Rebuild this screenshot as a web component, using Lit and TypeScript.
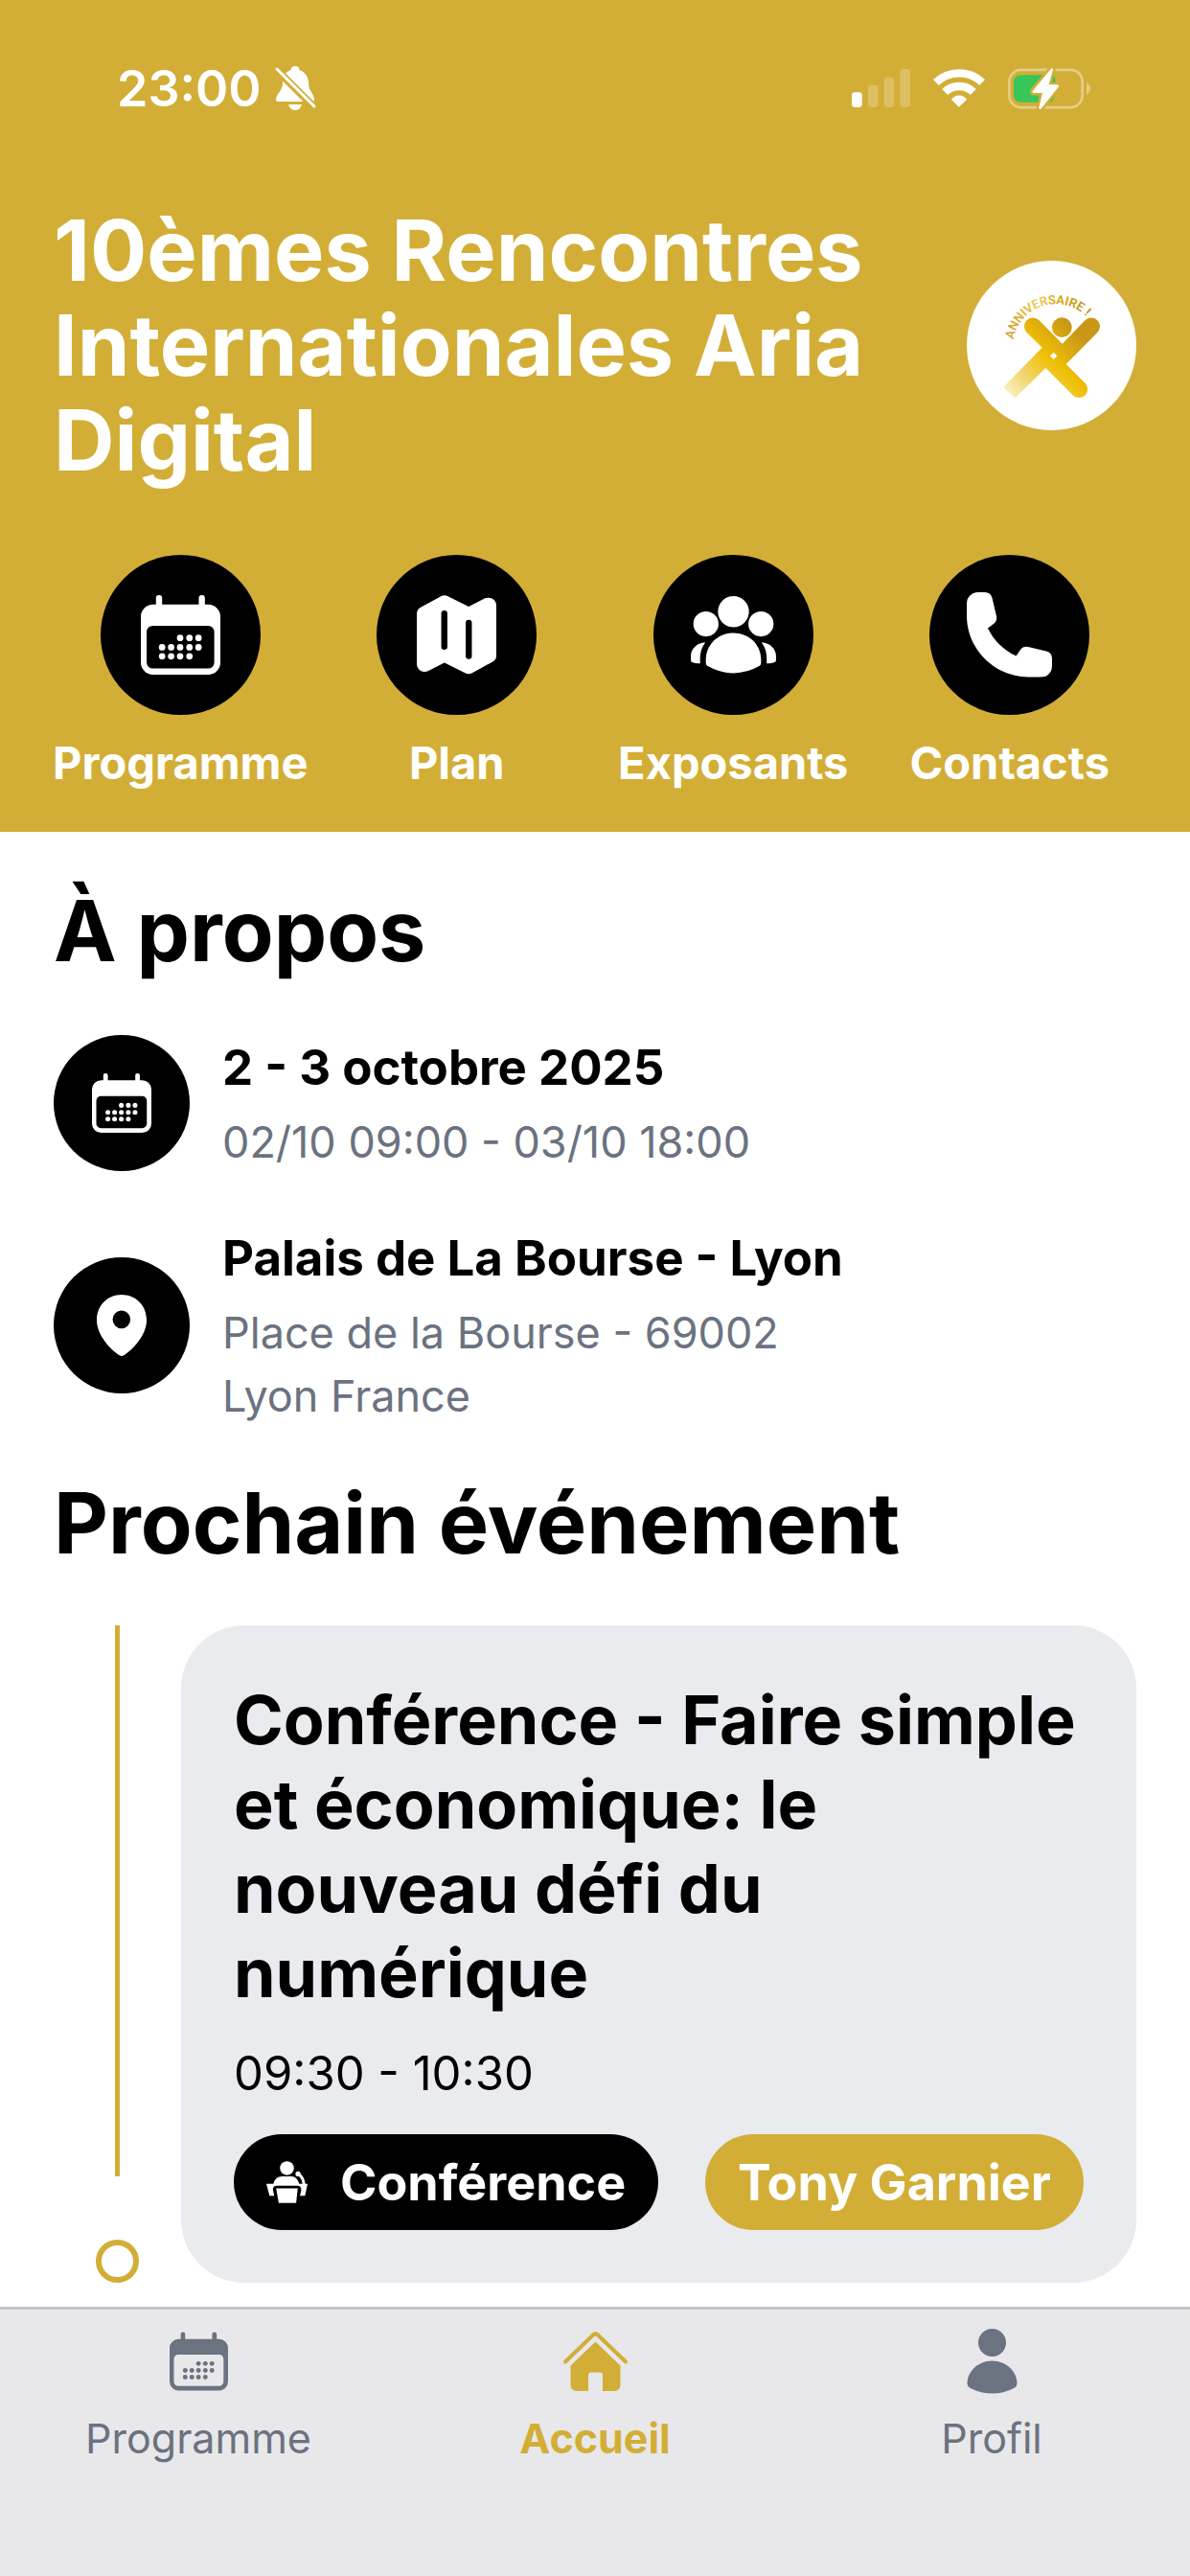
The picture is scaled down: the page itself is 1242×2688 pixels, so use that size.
import { LitElement, css, html, nothing, svg } from "lit";
import type { SVGTemplateResult } from "lit";
import { customElement, property } from "lit/decorators.js";
import { classMap } from "lit/directives/class-map.js";

interface Glyph {
  viewBox: string;
  body: SVGTemplateResult;
}

const calendarDots = [
  [122, 133], [151, 133], [179, 133],
  [66, 162], [94, 162], [122, 162], [151, 162], [179, 162],
  [66, 190], [94, 190], [122, 190], [151, 190],
];

const glyphs: Record<string, Glyph> = {
  calendar: {
    viewBox: "0 0 247 247",
    body: svg`
      <rect x="47" y="0" width="19" height="50" rx="9" />
      <rect x="180" y="0" width="19" height="50" rx="9" />
      <path
        fill-rule="evenodd"
        d="M38 29H209A38 38 0 0 1 247 67V209A38 38 0 0 1 209 247H38A38 38 0 0 1 0 209V67A38 38 0 0 1 38 29Z
           M37 95A19 19 0 0 0 18 114V209A19 19 0 0 0 37 228H209A19 19 0 0 0 228 209V114A19 19 0 0 0 209 95Z"
      />
      ${calendarDots.map(([x, y]) => svg`<circle cx=${x} cy=${y} r="10" />`)}
    `,
  },
  map: {
    viewBox: "0 0 247 247",
    body: svg`
      <path
        fill-rule="evenodd"
        d="M12 38L75 4Q86 -2 97 4L161 36L212 10Q224 5 236 12Q247 19 247 33V188Q247 200 237 206L172 242Q161 248 150 242L86 210L36 235Q23 241 11 234Q0 227 0 213V58Q0 45 12 38Z
           M76 57V160A9 9 0 0 0 95 160V57A9 9 0 0 0 76 57Z
           M152 86V189A9 9 0 0 0 171 189V86A9 9 0 0 0 152 86Z"
      />
    `,
  },
  people: {
    viewBox: "0 0 88 80",
    body: svg`
      <circle cx="44" cy="16" r="16" />
      <circle cx="15.6" cy="28.7" r="13" />
      <circle cx="72.4" cy="28.7" r="13" />
      <path d="M44 38C60 38 72.500 50 72.500 66V69Q72.500 71 71 72Q58 79.500 44 79.500Q30 79.500 17 72Q15.500 71 15.500 69V66C15.500 50 28 38 44 38Z" />
      <path d="M15 47.700C6 48 0 55 0 62V66Q0 68 2 68.500Q6 69.800 9.700 69.300C9.200 60 10.500 54 15 47.700Z" />
      <path d="M73 47.700C82 48 88 55 88 62V66Q88 68 86 68.500Q82 69.800 78.300 69.300C78.800 60 77.500 54 73 47.700Z" />
    `,
  },
  phone: {
    viewBox: "0 0 89 89",
    body: svg`
      <path
        d="M0 12Q0 6 4 3Q7 0 12 0H19Q25 0 26.500 6L31 25Q32 30 28 33L22 37.500C28 50 38 60 51.500 66.500L56 60Q59 56 64 57L83 61.500Q89 63 89 69V76Q89 82 86 85Q83 88.500 77 88.500H65C29 88.500 0 60 0 24Z"
      />
    `,
  },
  pin: {
    viewBox: "0 0 157 193",
    body: svg`
      <path
        fill-rule="evenodd"
        d="M78 0C122 0 157 33 157 80C157 128 112 174 85 191Q78 195 72 191C45 174 0 128 0 80C0 33 35 0 78 0Z
           M78 50A28 28 0 1 0 78 106A28 28 0 1 0 78 50Z"
      />
    `,
  },
  speaker: {
    viewBox: "0 0 130 132",
    body: svg`
      <circle cx="65" cy="22" r="22" />
      <path d="M0 71H22Q28 48 50 48H80Q96 49 104 71H130L122 109H106L110 92Q111 77 98 77H33Q19 77 21 92L25 109H10Z" />
      <path d="M31 86H99L94 132H39Z" />
      <path d="M102 42Q116 50 119 74" fill="none" stroke="currentColor" stroke-width="9" />
      <circle cx="100" cy="40" r="8" />
    `,
  },
  home: {
    viewBox: "0 0 67 63",
    body: svg`
      <path d="M2 32L31 4Q33.500 1.500 36 4L65 32" fill="none" stroke="currentColor" stroke-width="4" stroke-linecap="round" />
      <path d="M33.500 11L59.500 36V56Q59.500 62.500 53 62.500H41V46Q41 43 38 43H29Q26 43 26 46V62.500H14Q7.500 62.500 7.500 56V36Z" />
    `,
  },
  person: {
    viewBox: "0 0 52 68",
    body: svg`
      <circle cx="26" cy="14.5" r="14.500" />
      <path d="M26 33.500C41 33.500 52 45 52 57Q52 60 49.500 61.500Q39 67.500 26 67.500Q13 67.500 2.500 61.500Q0 60 0 57C0 45 11 33.500 26 33.500Z" />
    `,
  },
  muted: {
    viewBox: "0 0 42 46",
    body: svg`
      <path d="M21 0C18 0 16.500 2 16.500 4C10 6 8 12 8 18C8 26 1 29 1 35Q1 37 3 37H39Q41 37 41 35C41 29 35 26 35 18C35 12 32 6 25.500 4C25.500 2 24 0 21 0Z" />
      <path d="M14 40H28Q26 46 21 46Q16 46 14 40Z" />
      <path d="M2 4L40 42" fill="none" stroke="#d2ae36" stroke-width="8" />
      <path d="M2 3L41 42" fill="none" stroke="currentColor" stroke-width="3" stroke-linecap="round" />
    `,
  },
  signal: {
    viewBox: "63 52 182 119",
    body: svg`
      <rect x="63" y="124" width="32" height="47" rx="10" />
      <g opacity="0.22">
        <rect x="113" y="102" width="32" height="69" rx="10" />
        <rect x="163" y="78" width="32" height="93" rx="10" />
        <rect x="213" y="52" width="32" height="119" rx="10" />
      </g>
    `,
  },
  wifi: {
    viewBox: "315 51 161 120",
    body: svg`
      <path d="M323 93A105 105 0 0 1 468 93" fill="none" stroke="currentColor" stroke-width="25" />
      <path d="M351 123A64 64 0 0 1 440 123" fill="none" stroke="currentColor" stroke-width="25" />
      <path d="M395 170L371 146Q395 121 420 146Z" />
    `,
  },
  battery: {
    viewBox: "546 44 258 134",
    body: svg`
      <rect x="550" y="52" width="229" height="118" rx="38" fill="none" stroke="currentColor" stroke-width="8" opacity="0.400" />
      <path d="M792 93Q804 99 804 111Q804 123 792 129Z" opacity="0.400" />
      <path d="M588 68H690Q696 80 696 111Q696 142 680 154H588Q564 154 564 130V92Q564 68 588 68Z" fill="#36c759" />
      <g stroke-linejoin="round">
        <path d="M683 48L624 119Q622 123 626 123H656L644 172Q645 176 649 173L704 104Q705 100 701 100H672L686 50Z" fill="#d2ae36" stroke="#d2ae36" stroke-width="18" />
        <path d="M683 48L624 119Q622 123 626 123H656L644 172Q645 176 649 173L704 104Q705 100 701 100H672L686 50Z" stroke="currentColor" stroke-width="3" />
      </g>
    `,
  },
};

@customElement("event-icon")
export class EventIcon extends LitElement {
  static styles = css`
    :host {
      display: inline-flex;
      flex: none;
    }

    .glyph {
      display: block;
      width: 100%;
      height: 100%;
      fill: currentColor;
      overflow: visible;
    }
  `;

  @property() name = "";

  render() {
    const glyph = glyphs[this.name];
    if (!glyph) {
      return nothing;
    }
    return html`<svg class="glyph" viewBox=${glyph.viewBox} aria-hidden="true">${glyph.body}</svg>`;
  }
}

@customElement("event-logo")
export class EventLogo extends LitElement {
  static styles = css`
    :host {
      display: block;
      flex: none;
      width: 177px;
      height: 177px;
      border-radius: 50%;
      background: #fff;
    }

    .logo {
      display: block;
      width: 100%;
      height: 100%;
    }

    .arc {
      font-family: Roboto, "Liberation Sans", sans-serif;
      font-size: 39px;
      font-weight: 600;
    }
  `;

  render() {
    return html`
      <svg class="logo" viewBox="59 36 531 531" role="img" aria-label="Anniversaire">
        <defs>
          <linearGradient id="gold" gradientUnits="userSpaceOnUse" x1="190" y1="450" x2="410" y2="220">
            <stop offset="0" stop-color="#f8efbe" />
            <stop offset="0.250" stop-color="#f0d468" />
            <stop offset="0.520" stop-color="#efc005" />
            <stop offset="0.900" stop-color="#c99617" />
          </linearGradient>
          <linearGradient id="ink" gradientUnits="userSpaceOnUse" x1="180" y1="0" x2="440" y2="0">
            <stop offset="0" stop-color="#cda23a" />
            <stop offset="0.250" stop-color="#e0b62c" />
            <stop offset="0.400" stop-color="#edcf62" />
            <stop offset="0.600" stop-color="#d8a80e" />
            <stop offset="1" stop-color="#c08c14" />
          </linearGradient>
          <path id="arc" d="M205 283A135 135 0 0 1 458 245" />
        </defs>
        <text class="arc" fill="url(#ink)"><textPath href="#arc">ANNIVERSAIRE !</textPath></text>
        <g fill="url(#gold)">
          <circle cx="357" cy="245" r="31" />
          <path
            fill-rule="evenodd"
            d="M247 261A27 27 0 0 1 285 222L358 296L430 222A27 27 0 0 1 468 261L370 360L431 421A27 27 0 0 1 393 459L306 372L214 463Q210 466 206 463L177 436Q174 432 177 428L295 308Z
               M331 323L320 334L331 345L342 334Z"
          />
        </g>
      </svg>
    `;
  }
}

interface Shortcut {
  icon: string;
  label: string;
}

interface Info {
  icon: string;
  title: string;
  detail: string;
}

interface Tab {
  icon: string;
  label: string;
  active?: boolean;
}

const shortcuts: Shortcut[] = [
  { icon: "calendar", label: "Programme" },
  { icon: "map", label: "Plan" },
  { icon: "people", label: "Exposants" },
  { icon: "phone", label: "Contacts" },
];

const infos: Info[] = [
  { icon: "calendar", title: "2 - 3 octobre 2025", detail: "02/10 09:00 - 03/10 18:00" },
  { icon: "pin", title: "Palais de La Bourse - Lyon", detail: "Place de la Bourse - 69002 Lyon France" },
];

const tabs: Tab[] = [
  { icon: "calendar", label: "Programme" },
  { icon: "home", label: "Accueil", active: true },
  { icon: "person", label: "Profil" },
];

@customElement("app-root")
export class AppRoot extends LitElement {
  static styles = css`
    :host {
      --gold: #d2ae36;
      --grey: #6b7280;
      display: flex;
      flex-direction: column;
      min-height: 100vh;
      background: #fff;
      color: #000;
      font-family: Inter, "Open Sans", sans-serif;
    }

    *,
    *::before,
    *::after {
      box-sizing: border-box;
    }

    h1,
    h2,
    h3,
    p {
      margin: 0;
    }

    .header {
      padding-bottom: 42px;
      background: var(--gold);
      color: #fff;
    }

    .status {
      display: flex;
      align-items: center;
      justify-content: space-between;
      height: 184px;
      padding: 0 104px 0 122px;
    }

    .clock,
    .indicators {
      display: flex;
      align-items: center;
    }

    .clock {
      gap: 14px;
      font-size: 52px;
      font-weight: 600;
    }

    .indicators {
      gap: 24px;
    }

    .muted {
      width: 42px;
      height: 46px;
    }

    .signal {
      width: 61px;
      height: 40px;
    }

    .wifi {
      width: 54px;
      height: 40px;
    }

    .battery {
      width: 86px;
      height: 45px;
    }

    .heading {
      display: flex;
      align-items: center;
      justify-content: space-between;
      gap: 40px;
      padding: 28px 56px 70px;
    }

    .title,
    .section-title {
      font-size: 88px;
      font-weight: 700;
      line-height: 99px;
    }

    .shortcuts {
      display: grid;
      grid-template-columns: repeat(4, 1fr);
      padding: 0 44px;
    }

    .shortcut {
      display: flex;
      flex-direction: column;
      align-items: center;
      gap: 20px;
      padding: 0;
      border: 0;
      background: none;
      color: inherit;
      font: inherit;
      font-size: 47px;
      font-weight: 700;
      line-height: 60px;
    }

    .disc {
      display: flex;
      flex: none;
      align-items: center;
      justify-content: center;
      width: 142px;
      height: 142px;
      border-radius: 50%;
      background: #000;
      color: #fff;
    }

    .disc.large {
      width: 167px;
      height: 167px;
    }

    .disc event-icon {
      width: 62px;
      height: 64px;
    }

    .disc.large event-icon {
      width: 83px;
      height: 83px;
    }

    .disc.large .people,
    .disc.large .phone {
      width: 89px;
      height: 89px;
    }

    .content {
      display: flex;
      flex: 1;
      flex-direction: column;
      padding: 54px 56px 25px;
    }

    .infos {
      display: flex;
      flex-direction: column;
      gap: 51px;
      margin: 56px 0 50px;
    }

    .info {
      display: flex;
      align-items: center;
      gap: 34px;
    }

    .info-text {
      display: flex;
      flex-direction: column;
      gap: 8px;
      max-width: 680px;
    }

    .info-title {
      font-size: 51px;
      font-weight: 700;
      line-height: 74px;
    }

    .info-detail {
      color: var(--grey);
      font-size: 45px;
      line-height: 66px;
    }

    .event {
      display: flex;
      margin-top: 57px;
    }

    .rail {
      display: flex;
      flex: none;
      flex-direction: column;
      align-items: center;
      gap: 66px;
      width: 133px;
    }

    .rail-line {
      flex: 1;
      width: 5px;
      background: var(--gold);
    }

    .rail-dot {
      width: 45px;
      height: 45px;
      border: 6px solid var(--gold);
      border-radius: 50%;
    }

    .card {
      flex: 1;
      min-width: 0;
      padding: 55px;
      border-radius: 66px;
      background: #eaebef;
    }

    .card-title {
      font-size: 70px;
      font-weight: 700;
      line-height: 88px;
    }

    .time {
      margin: 28px 0 30px;
      font-size: 49px;
      line-height: 66px;
    }

    .tags {
      display: flex;
      justify-content: space-between;
    }

    .tag {
      display: flex;
      align-items: center;
      gap: 34px;
      height: 100px;
      padding: 0 34px;
      border-radius: 50px;
      background: #000;
      color: #fff;
      font-size: 52px;
      font-weight: 700;
    }

    .tag.place {
      background: var(--gold);
    }

    .speaker {
      width: 43px;
      height: 44px;
    }

    .tabs {
      display: grid;
      grid-template-columns: repeat(3, 1fr);
      padding: 20px 0 119px;
      border-top: 3px solid #c4c4c6;
      background: #e8e8ea;
    }

    .tab {
      display: flex;
      flex-direction: column;
      align-items: center;
      gap: 21px;
      color: var(--grey);
      font-size: 43px;
      line-height: 50px;
      text-decoration: none;
    }

    .tab.active {
      color: var(--gold);
      font-weight: 700;
    }

    .tab event-icon {
      width: 67px;
      height: 68px;
    }

    .tab .calendar {
      padding: 3px;
    }
  `;

  render() {
    return html`
      <header class="header">
        <div class="status">
          <div class="clock">
            <span>23:00</span>
            <event-icon class="muted" name="muted"></event-icon>
          </div>
          <div class="indicators">
            <event-icon class="signal" name="signal"></event-icon>
            <event-icon class="wifi" name="wifi"></event-icon>
            <event-icon class="battery" name="battery"></event-icon>
          </div>
        </div>
        <div class="heading">
          <h1 class="title">10èmes Rencontres Internationales Aria Digital</h1>
          <event-logo></event-logo>
        </div>
        <nav class="shortcuts">${shortcuts.map((item) => this.renderShortcut(item))}</nav>
      </header>
      <main class="content">
        <h2 class="section-title">À propos</h2>
        <div class="infos">${infos.map((item) => this.renderInfo(item))}</div>
        <h2 class="section-title">Prochain événement</h2>
        <div class="event">
          <div class="rail">
            <span class="rail-line"></span>
            <span class="rail-dot"></span>
          </div>
          <article class="card">
            <h3 class="card-title">Conférence - Faire simple et économique: le nouveau défi du numérique</h3>
            <p class="time">09:30 - 10:30</p>
            <div class="tags">
              <span class="tag"><event-icon class="speaker" name="speaker"></event-icon>Conférence</span>
              <span class="tag place">Tony Garnier</span>
            </div>
          </article>
        </div>
      </main>
      <nav class="tabs">${tabs.map((tab) => this.renderTab(tab))}</nav>
    `;
  }

  private renderShortcut({ icon, label }: Shortcut) {
    return html`
      <button class="shortcut" type="button">
        <span class="disc large"><event-icon class=${icon} name=${icon}></event-icon></span>
        <span>${label}</span>
      </button>
    `;
  }

  private renderInfo({ icon, title, detail }: Info) {
    return html`
      <div class="info">
        <span class="disc"><event-icon name=${icon}></event-icon></span>
        <div class="info-text">
          <h3 class="info-title">${title}</h3>
          <p class="info-detail">${detail}</p>
        </div>
      </div>
    `;
  }

  private renderTab({ icon, label, active = false }: Tab) {
    return html`
      <a class=${classMap({ tab: true, active })} href="#" aria-current=${active ? "page" : nothing}>
        <event-icon class=${icon} name=${icon}></event-icon>
        <span>${label}</span>
      </a>
    `;
  }
}

declare global {
  interface HTMLElementTagNameMap {
    "app-root": AppRoot;
    "event-icon": EventIcon;
    "event-logo": EventLogo;
  }
}
